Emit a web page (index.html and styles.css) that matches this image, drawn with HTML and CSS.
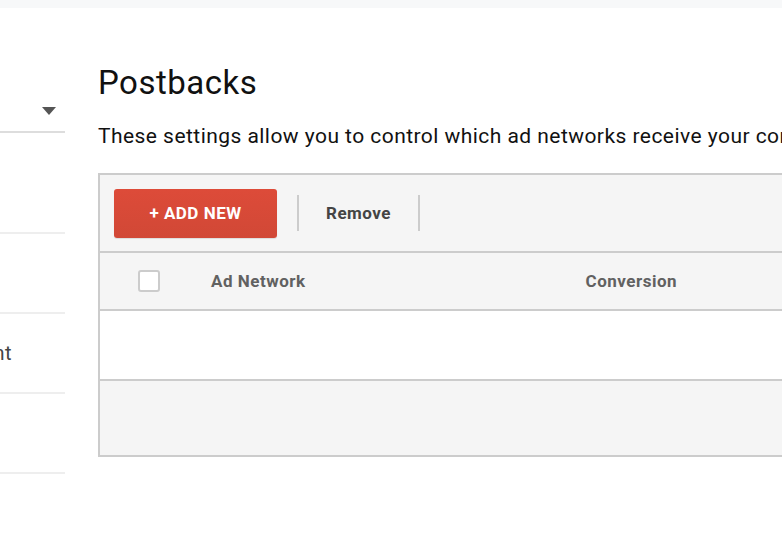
FILE: index.html
```html
<!DOCTYPE html>
<html>
<head>
<meta charset="utf-8">
<link rel="stylesheet" href="styles.css">
</head>
<body>
<div class="topbar"></div>
<div class="layout">
  <aside class="sidebar">
    <div class="select">
      <span class="caret"></span>
    </div>
    <div class="nav-item nav-first"></div>
    <div class="nav-item"></div>
    <div class="nav-item"><span class="nav-label">Event Management</span></div>
    <div class="nav-item"></div>
  </aside>
  <main class="main">
    <h1 class="title">Postbacks</h1>
    <p class="desc">These settings allow you to control which ad networks receive your conversion data and postbacks.</p>
    <div class="table">
      <div class="toolbar">
        <button class="btn-add">+ ADD NEW</button>
        <span class="sep"></span>
        <span class="btn-remove">Remove</span>
        <span class="sep"></span>
      </div>
      <div class="thead">
        <span class="checkbox"></span>
        <span class="th th-network">Ad Network</span>
        <span class="th th-conv">Conversion</span>
      </div>
      <div class="row row-white"></div>
      <div class="row row-gray"></div>
    </div>
  </main>
</div>
</body>
</html>
```

FILE: styles.css
```css
html, body {
  margin: 0;
  padding: 0;
  background: #fff;
  font-family: Roboto, "Liberation Sans", Arial, sans-serif;
  overflow: hidden;
}
.topbar {
  height: 8px;
  background: #f7f8f9;
}
.layout {
  display: flex;
  height: 526px;
}
.sidebar {
  width: 65px;
  flex: none;
  overflow: hidden;
  display: flex;
  flex-direction: column;
}
.select {
  height: 125px;
  flex: none;
  box-sizing: border-box;
  border-bottom: 2px solid #dddddd;
  display: flex;
  align-items: flex-end;
  justify-content: flex-end;
  padding: 0 9px 16px 0;
}
.caret {
  width: 0;
  height: 0;
  border-left: 7px solid transparent;
  border-right: 7px solid transparent;
  border-top: 8px solid #555;
}
.nav-item {
  height: 80px;
  flex: none;
  box-sizing: border-box;
  border-bottom: 2px solid #eeeeee;
  display: flex;
  align-items: center;
  justify-content: flex-end;
  padding-right: 53px;
  white-space: nowrap;
}
.nav-first {
  height: 101px;
}
.nav-label {
  font-size: 20px;
  color: #444;
  flex: none;
  letter-spacing: 0.4px;
}
.main {
  flex: 1;
  padding-left: 33px;
  overflow: hidden;
  min-width: 0;
}
.title {
  margin: 55px 0 0;
  font-size: 33px;
  line-height: 40px;
  font-weight: 400;
  color: #111;
  letter-spacing: 0.5px;
}
.desc {
  margin: 21px 0 0;
  font-size: 21px;
  line-height: 24px;
  color: #111;
  white-space: nowrap;
  letter-spacing: 0.45px;
}
.table {
  margin-top: 25px;
  width: 900px;
  border: 2px solid #cccccc;
  background: #f5f5f5;
}
.toolbar {
  display: flex;
  align-items: center;
  padding-left: 14px;
  border-bottom: 2px solid #cccccc;
  box-sizing: border-box;
  height: 78px;
}
.btn-add {
  width: 163px;
  height: 49px;
  border: none;
  border-radius: 3px;
  background: linear-gradient(#dd4b39, #d14836);
  color: #fff;
  font-family: Roboto, "Liberation Sans", Arial, sans-serif;
  font-weight: 700;
  font-size: 17px;
  letter-spacing: 0.5px;
  padding: 0;
  box-shadow: 0 1px 1px rgba(0,0,0,0.1);
}
.sep {
  width: 2px;
  height: 36px;
  background: #cccccc;
  margin-left: 20px;
}
.btn-remove {
  font-size: 17px;
  font-weight: 700;
  color: #444;
  letter-spacing: 0.5px;
  margin: 0 27px 0 27px;
}
.btn-remove + .sep {
  margin-left: 0;
}
.thead {
  height: 58px;
  box-sizing: border-box;
  border-bottom: 2px solid #cccccc;
  display: flex;
  align-items: center;
}
.checkbox {
  width: 22px;
  height: 22px;
  box-sizing: border-box;
  border: 2px solid #cccccc;
  border-radius: 3px;
  background: #fff;
  margin-left: 38px;
}
.th {
  font-size: 17px;
  font-weight: 700;
  color: #616161;
  letter-spacing: 0.5px;
}
.th-network {
  margin-left: 51px;
}
.th-conv {
  margin-left: 280px;
}
.row {
  box-sizing: border-box;
}
.row-white {
  height: 70px;
  background: #fff;
  border-bottom: 2px solid #cccccc;
}
.row-gray {
  height: 74px;
  background: #f5f5f5;
}
```
